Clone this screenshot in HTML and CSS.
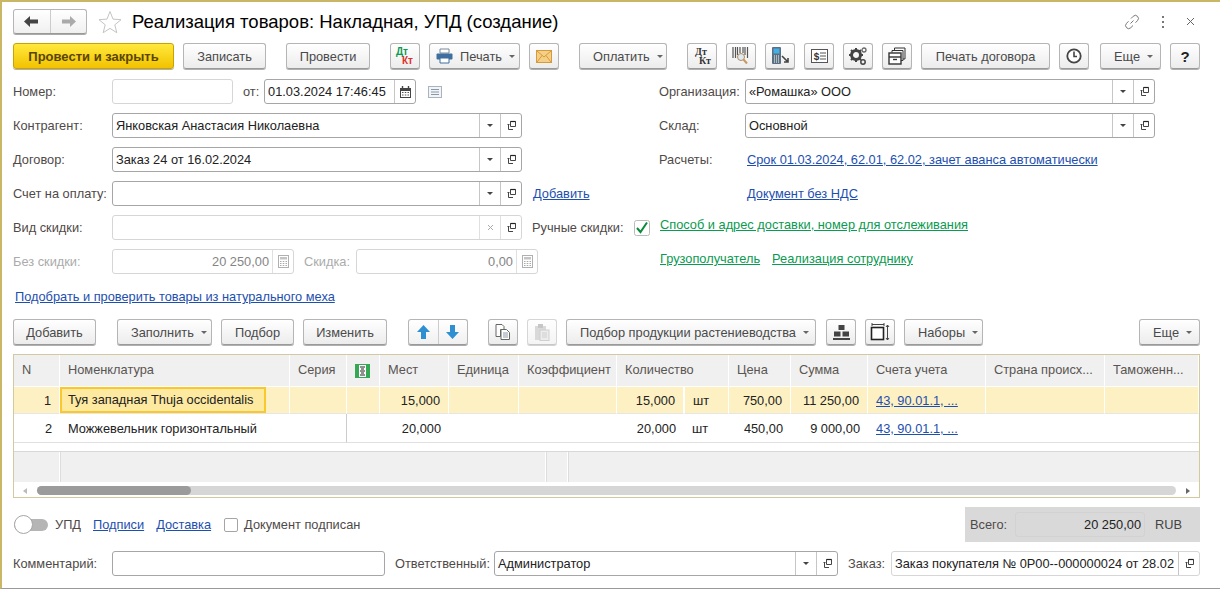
FILE: index.html
```html
<!DOCTYPE html>
<html lang="ru">
<head>
<meta charset="utf-8">
<title>Реализация товаров</title>
<link rel="stylesheet" href="styles.css">
</head>
<body>
<svg class="defs" width="0" height="0" aria-hidden="true">
  <symbol id="open" viewBox="0 0 11 11"><path d="M4.500 1.500h5v5h-5z" fill="none" stroke="#444"/><path d="M4.500 1.500h5" stroke="#222" stroke-width="1.200"/><path d="M2.500 4v5.500H7M1.500 4.500h2" fill="none" stroke="#444"/></symbol>
  <symbol id="calc" viewBox="0 0 11 13"><rect x=".5" y=".5" width="10" height="12" fill="#fff" stroke="#b0b0b0"/><rect x="2" y="2" width="7" height="2.500" fill="#c4c4c4"/><path d="M2 6.500h1.500M4.700 6.500h1.600M7.500 6.500H9M2 8.500h1.500M4.700 8.500h1.600M7.500 8.500H9M2 10.500h1.500M4.700 10.500h1.600M7.500 10.500H9" stroke="#aaa"/></symbol>
</svg>
<main class="window">
  <header class="titlebar">
    <div class="nav">
      <button class="nav-btn"><svg width="15" height="11" viewBox="0 0 15 11"><path d="M0 5.500 6 0v3.500h8v4H6V11z" fill="#444"/></svg></button>
      <button class="nav-btn"><svg width="15" height="11" viewBox="0 0 15 11"><path d="M15 5.500 9 0v3.500H1v4h8V11z" fill="#aaa"/></svg></button>
    </div>
    <svg class="star" width="24" height="24" viewBox="0 0 24 24"><path d="M12 1.500l3 7.600 8 .6-6.200 5.100 2 7.900-6.800-4.300-6.800 4.300 2-7.900L1 9.700l8-.6z" fill="#fff" stroke="#c4c4c4"/></svg>
    <h1 class="title">Реализация товаров: Накладная, УПД (создание)</h1>
    <div class="win-tools">
      <svg width="16" height="16" viewBox="0 0 16 16"><path d="M6.500 9.500l3-3M7 4.500l2.200-2.200a3 3 0 0 1 4.300 4.300L11.500 8.700M9 11.500l-2.200 2.200a3 3 0 0 1-4.300-4.300L4.500 7.300" fill="none" stroke="#777"/></svg>
      <svg width="4" height="14" viewBox="0 0 4 14"><path d="M1 1h2v2H1zM1 6h2v2H1zM1 11h2v2H1z" fill="#777"/></svg>
      <svg width="9" height="9" viewBox="0 0 9 9"><path d="M1 1l7 7M8 1L1 8" stroke="#666"/></svg>
    </div>
  </header>

  <div class="toolbar">
    <button class="btn primary w161">Провести и закрыть</button>
    <button class="btn w83 ml9">Записать</button>
    <button class="btn w84 ml20">Провести</button>
    <button class="btn icon ml20"><svg width="20" height="20" viewBox="0 0 20 20"><text x="1" y="9" class="dt green">Дт</text><text x="7" y="18" class="dt red">Кт</text></svg></button>
    <button class="btn w91 ml9 menu with-icon"><svg width="17" height="16" viewBox="0 0 17 16"><path d="M4 1h9v4H4z" fill="#fff" stroke="#7a8a9a"/><rect x=".5" y="5.500" width="16" height="6" rx="1" fill="#3f6f9f"/><path d="M4 10h9v5H4z" fill="#fff" stroke="#3f6f9f"/></svg><span>Печать</span><i class="caret"></i></button>
    <button class="btn icon ml9"><svg width="16" height="13" viewBox="0 0 16 13"><rect x=".5" y=".5" width="15" height="12" fill="#f5cf85" stroke="#d59a3a"/><path d="M1 1l7 6 7-6M1 12l5-6.500M15 12l-5-6.500" fill="none" stroke="#d59a3a"/></svg></button>
    <button class="btn w88 ml20 menu"><span>Оплатить</span><i class="caret"></i></button>
    <button class="btn icon ml20"><svg width="20" height="20" viewBox="0 0 20 20"><text x="3" y="9" class="dt2">Дт</text><text x="7" y="18" class="dt2">Кт</text></svg></button>
    <button class="btn icon ml9"><svg width="18" height="20" viewBox="0 0 18 20"><path d="M1 1v11M3.500 1v11M5.500 1v8M8 1v6M11 1v6M13 1v8M15.500 1v11" stroke="#555" stroke-width="1.200"/><circle cx="9" cy="11" r="3.500" fill="#dfe9f2" stroke="#b08a5a"/><path d="M11.500 13.500l3.500 4" stroke="#c79a5f" stroke-width="2"/></svg></button>
    <button class="btn icon ml9"><svg width="20" height="20" viewBox="0 0 20 20"><rect x="2" y="1" width="9" height="17" rx="1" fill="#5a6f80"/><rect x="3.500" y="2.500" width="6" height="5" fill="#45aee6"/><path d="M4 10h5M4 12h5M4 14h5M4 16h5" stroke="#fff" stroke-dasharray="1 1"/><path d="M12 10l6 6M18 12v4h-4" fill="none" stroke="#444" stroke-width="1.600"/></svg></button>
    <button class="btn icon ml9"><svg width="17" height="14" viewBox="0 0 17 14"><rect x=".5" y=".5" width="16" height="13" fill="#fff" stroke="#555"/><text x="2.500" y="11" class="dollar">$</text><path d="M9 4h6M9 7h6M9 10h6" stroke="#555"/></svg></button>
    <button class="btn icon ml9"><svg width="20" height="20" viewBox="0 0 20 20"><circle cx="8" cy="9" r="4.500" fill="none" stroke="#444" stroke-width="3"/><path d="M8 2v2M8 14v2M1 9h2M13 9h2M3 4l1.500 1.500M13 4l-1.500 1.500M3 14l1.500-1.500M13 14l-1.500-1.500" stroke="#444" stroke-width="2"/><circle cx="16" cy="4" r="2" fill="none" stroke="#666" stroke-width="1.300"/><circle cx="15" cy="16" r="2.200" fill="none" stroke="#444" stroke-width="1.500"/></svg></button>
    <button class="btn icon ml9"><svg width="18" height="18" viewBox="0 0 18 18"><path d="M6.500 3V1h10.500v11h-2M4 5.500V3.500h11v10h-2" fill="none" stroke="#333"/><rect x="1" y="6" width="12" height="11" fill="#fff" stroke="#333" stroke-width="1.400"/><path d="M1 10h12" stroke="#333" stroke-width="1.400"/><path d="M5 12.500h4" stroke="#333" stroke-width="1.400"/></svg></button>
    <button class="btn w129 ml9">Печать договора</button>
    <button class="btn icon ml9"><svg width="16" height="16" viewBox="0 0 16 16"><circle cx="8" cy="8" r="6.700" fill="#fff" stroke="#444" stroke-width="1.800"/><path d="M8 3.500V8.500H11" fill="none" stroke="#444" stroke-width="1.600"/></svg></button>
    <button class="btn w61 ml11 menu"><span>Еще</span><i class="caret"></i></button>
    <button class="btn icon ml9 help">?</button>
  </div>

  <section class="form">
    <div class="col-left">
      <div class="row">
        <label class="lbl">Номер:</label>
        <div class="field w121 muted"></div>
        <label class="lbl ot">от:</label>
        <div class="field w152"><span class="val date">01.03.2024 17:46:45</span><span class="fbtn"><svg width="11" height="12" viewBox="0 0 11 12"><rect x=".5" y="2.500" width="10" height="9" fill="#fff" stroke="#444"/><rect x="0" y="2" width="11" height="3" fill="#444"/><path d="M2.500 0v3M8.500 0v3" stroke="#444" stroke-width="1.400"/><path d="M2 6.500h1.500M4.800 6.500h1.500M7.500 6.500H9M2 9h1.500M4.800 9h1.500M7.500 9H9" stroke="#555"/></svg></span></div>
        <svg class="note" width="14" height="12" viewBox="0 0 14 12"><rect x=".5" y=".5" width="13" height="11" fill="#f2f5f8" stroke="#a9b4c0"/><path d="M3 3.500h8M3 6h8M3 8.500h8" stroke="#8b98a6"/></svg>
      </div>
      <div class="row">
        <label class="lbl">Контрагент:</label>
        <div class="field w410"><span class="val">Янковская Анастасия Николаевна</span><span class="fbtn"><i class="caret dark"></i></span><span class="fbtn"><svg class="oi"><use href="#open"/></svg></span></div>
      </div>
      <div class="row">
        <label class="lbl">Договор:</label>
        <div class="field w410"><span class="val">Заказ 24 от 16.02.2024</span><span class="fbtn"><i class="caret dark"></i></span><span class="fbtn"><svg class="oi"><use href="#open"/></svg></span></div>
      </div>
      <div class="row">
        <label class="lbl">Счет на оплату:</label>
        <div class="field w410"><span class="val"></span><span class="fbtn"><i class="caret dark"></i></span><span class="fbtn"><svg class="oi"><use href="#open"/></svg></span></div>
        <a class="link add" href="#">Добавить</a>
      </div>
      <div class="row">
        <label class="lbl">Вид скидки:</label>
        <div class="field w410 muted"><span class="val"></span><span class="fbtn"><svg width="7" height="7" viewBox="0 0 7 7"><path d="M1 1l5 5M6 1L1 6" stroke="#aaa"/></svg></span><span class="fbtn"><svg class="oi"><use href="#open"/></svg></span></div>
        <label class="lbl manual">Ручные скидки:</label>
        <svg class="check" width="16" height="16" viewBox="0 0 16 16"><rect x=".5" y=".5" width="15" height="15" rx="2" fill="#fff" stroke="#bbb"/><path d="M3 8l3.500 4L13 2.500" fill="none" stroke="#0a8a3c" stroke-width="2"/></svg>
      </div>
      <div class="row">
        <label class="lbl off">Без скидки:</label>
        <div class="field w182 muted"><span class="val num dim">20 250,00</span><span class="fbtn"><svg class="ci"><use href="#calc"/></svg></span></div>
        <label class="lbl off skidka">Скидка:</label>
        <div class="field w182 muted"><span class="val num dim">0,00</span><span class="fbtn"><svg class="ci"><use href="#calc"/></svg></span></div>
      </div>
    </div>
    <div class="col-right">
      <div class="row">
        <label class="lbl rl">Организация:</label>
        <div class="field w410"><span class="val">«Ромашка» ООО</span><span class="fbtn"><i class="caret dark"></i></span><span class="fbtn"><svg class="oi"><use href="#open"/></svg></span></div>
      </div>
      <div class="row">
        <label class="lbl rl">Склад:</label>
        <div class="field w410"><span class="val">Основной</span><span class="fbtn"><i class="caret dark"></i></span><span class="fbtn"><svg class="oi"><use href="#open"/></svg></span></div>
      </div>
      <div class="row">
        <label class="lbl rl">Расчеты:</label>
        <a class="link rv" href="#">Срок 01.03.2024, 62.01, 62.02, зачет аванса автоматически</a>
      </div>
      <div class="row">
        <span class="rl"></span>
        <a class="link rv" href="#">Документ без НДС</a>
      </div>
      <div class="row raised">
        <a class="link green" href="#">Способ и адрес доставки, номер для отслеживания</a>
      </div>
      <div class="row">
        <a class="link green" href="#">Грузополучатель</a>
        <a class="link green" href="#">Реализация сотруднику</a>
      </div>
    </div>
  </section>

  <a class="link fur" href="#">Подобрать и проверить товары из натурального меха</a>

  <div class="toolbar second">
    <button class="btn w83">Добавить</button>
    <button class="btn w95 ml21 menu"><span>Заполнить</span><i class="caret"></i></button>
    <button class="btn w73 ml9">Подбор</button>
    <button class="btn w84 ml9">Изменить</button>
    <div class="nav small ml21">
      <button class="nav-btn s"><svg width="13" height="14" viewBox="0 0 13 14"><path d="M6.500 0l6.500 7H9v7H4V7H0z" fill="#2f8fd3"/></svg></button>
      <button class="nav-btn s"><svg width="13" height="14" viewBox="0 0 13 14"><path d="M6.500 14L13 7H9V0H4v7H0z" fill="#2f8fd3"/></svg></button>
    </div>
    <button class="btn icon ml20"><svg width="16" height="16" viewBox="0 0 16 16"><path d="M1 .5h6l2 2v3H5.500v7H1z" fill="#fff" stroke="#666"/><path d="M6 5.500h5.500l3 3v7H6z" fill="#fff" stroke="#666"/><path d="M8 9h5M8 11h5M8 13h5" stroke="#8899aa"/></svg></button>
    <button class="btn icon ml9 disabled"><svg width="16" height="17" viewBox="0 0 16 17"><rect x="1" y="2" width="11" height="14" fill="#bbb"/><rect x="4" y="0" width="5" height="4" fill="#999"/><rect x="6" y="6" width="9" height="10.500" fill="#ddd" stroke="#aaa"/><path d="M8 9h5M8 11h5M8 13h5" stroke="#aaa"/></svg></button>
    <button class="btn w250 ml9 menu"><span>Подбор продукции растениеводства</span><i class="caret"></i></button>
    <button class="btn icon ml10"><svg width="17" height="15" viewBox="0 0 17 15"><path d="M5.500 0h6v5h-6zM1 6.500h6.500v5H1zM9.500 6.500H16v5H9.500z" fill="#444"/><path d="M0 14h17" stroke="#444" stroke-width="2"/></svg></button>
    <button class="btn icon ml9"><svg width="20" height="18" viewBox="0 0 20 18"><rect x="1.500" y="4.500" width="12" height="12" fill="#fff" stroke="#222" stroke-width="1.600"/><path d="M2 1.500h12M2 0v3M14 0v3" stroke="#444"/><path d="M17.500 2v15M16 4l1.500-2L19 4M16 15l1.500 2 1.500-2" fill="none" stroke="#444"/></svg></button>
    <button class="btn w79 ml9 menu"><span>Наборы</span><i class="caret"></i></button>
    <button class="btn w61 push menu"><span>Еще</span><i class="caret"></i></button>
  </div>

  <section class="grid-wrap">
    <table class="grid">
      <colgroup>
        <col class="c46"><col class="c230"><col class="c57"><col class="c33"><col class="c69"><col class="c70"><col class="c98"><col class="c67"><col class="c45"><col class="c62"><col class="c77"><col class="c118"><col class="c119"><col class="c94">
      </colgroup>
      <thead>
        <tr>
          <th>N</th><th>Номенклатура</th><th>Серия</th>
          <th class="mark"><svg width="15" height="14" viewBox="0 0 15 14"><rect width="15" height="14" fill="#34a853"/><rect x="4" y="1" width="7" height="12" fill="#fff"/><path d="M5 3h5M6 5h3M5 7h5M6 9h3M5 11h5" stroke="#222"/></svg></th>
          <th>Мест</th><th>Единица</th><th>Коэффициент</th><th colspan="2">Количество</th><th>Цена</th><th>Сумма</th><th>Счета учета</th><th>Страна происх...</th><th>Таможенн...</th>
        </tr>
      </thead>
      <tbody>
        <tr class="sel">
          <td class="num">1</td>
          <td class="cur-td"><div class="cur">Туя западная Thuja occidentalis</div></td>
          <td></td><td></td><td class="num">15,000</td><td></td><td></td><td class="num">15,000</td><td class="unit">шт</td><td class="num">750,00</td><td class="num">11 250,00</td>
          <td><a class="link" href="#">43, 90.01.1, ...</a></td><td></td><td></td>
        </tr>
        <tr class="plain">
          <td class="num">2</td>
          <td colspan="2" class="name">Можжевельник горизонтальный</td>
          <td></td><td class="num">20,000</td><td></td><td></td><td class="num">20,000</td><td class="unit">шт</td><td class="num">450,00</td><td class="num">9 000,00</td>
          <td><a class="link" href="#">43, 90.01.1, ...</a></td><td></td><td></td>
        </tr>
      </tbody>
    </table>
    <div class="grid-space"></div>
    <div class="grid-foot"><span class="gf g1"></span><span class="gf g2"></span><span class="gf g3"></span><span class="gf g4"></span></div>
    <div class="hscroll">
      <i class="arr left"></i>
      <div class="track"><div class="thumb"></div></div>
      <i class="arr right"></i>
    </div>
  </section>

  <div class="status">
    <span class="toggle"><i class="knob"></i></span>
    <span class="lbl upd">УПД</span>
    <a class="link" href="#">Подписи</a>
    <a class="link" href="#">Доставка</a>
    <span class="box"></span>
    <span class="lbl signed">Документ подписан</span>
    <div class="total">
      <span class="lbl total-lbl">Всего:</span>
      <span class="total-val">20 250,00</span>
      <span class="cur-code">RUB</span>
    </div>
  </div>

  <div class="bottom">
    <label class="lbl">Комментарий:</label>
    <div class="field w273"></div>
    <label class="lbl resp">Ответственный:</label>
    <div class="field w344"><span class="val">Администратор</span><span class="fbtn"><i class="caret dark"></i></span><span class="fbtn"><svg class="oi"><use href="#open"/></svg></span></div>
    <label class="lbl order">Заказ:</label>
    <div class="field w309 soft"><span class="val clip">Заказ покупателя № 0Р00--000000024 от 28.02</span><span class="fbtn"><svg class="oi"><use href="#open"/></svg></span></div>
  </div>
</main>
</body>
</html>
```

FILE: styles.css
```css
* { box-sizing: border-box; }
html, body { margin: 0; padding: 0; }
body { width: 1220px; height: 589px; overflow: hidden; background: #fff; font: 12.8px "Liberation Sans", Arial, sans-serif; color: #222; }
.defs { position: absolute; }
.window { width: 1220px; height: 589px; border-top: 2px solid #c9b766; border-left: 2px solid #c9b766; border-bottom: 1px solid #999; padding: 7px 20px 0 11px; overflow: hidden; }
button { font: inherit; color: inherit; margin: 0; }

.titlebar { display: flex; align-items: center; height: 25px; }
.nav { display: flex; height: 25px; width: 74px; border: 1px solid #b5b5b5; border-bottom-color: #999; border-radius: 3px; background: linear-gradient(#fff, #f0f0f0); box-shadow: 0 1px 0 #aaa; }
.nav-btn { flex: 1; border: 0; background: none; padding: 0; display: flex; align-items: center; justify-content: center; }
.nav-btn + .nav-btn { border-left: 1px solid #ccc; }
.star { margin-left: 11px; }
.title { margin: 0 0 0 10px; font-size: 18.5px; font-weight: 400; color: #000; }
.win-tools { margin-left: auto; display: flex; align-items: center; gap: 21px; margin-right: 5px; }

.toolbar { display: flex; align-items: flex-start; height: 26px; margin-top: 9px; }
.btn { height: 26px; padding: 0; border: 1px solid #b5b5b5; border-bottom-color: #9a9a9a; border-radius: 3px; background: linear-gradient(#fff, #ececec); box-shadow: 0 1px 0 #b0b0b0; color: #4a4a4a; display: flex; align-items: center; justify-content: center; flex: none; }
.btn.primary { background: linear-gradient(#ffe93d, #f2c200); border-color: #c9a400; color: #5a4500; font-weight: 700; font-size: 13px; }
.btn.icon { width: 30px; }
.btn.disabled { opacity: .55; }
.help { font-size: 15px; font-weight: 700; color: #222; }
.menu { gap: 7px; justify-content: flex-start; padding-left: 13px; }
.menu.with-icon { padding-left: 6px; }
.caret { display: inline-block; width: 0; height: 0; border-left: 3px solid transparent; border-right: 3px solid transparent; border-top: 3px solid #666; }
.caret.dark { border-top-color: #444; }
.w161 { width: 161px; } .w83 { width: 83px; } .w84 { width: 84px; } .w91 { width: 91px; } .w88 { width: 88px; } .w129 { width: 129px; } .w61 { width: 61px; } .w95 { width: 95px; } .w73 { width: 73px; } .w250 { width: 250px; } .w79 { width: 79px; }
.ml9 { margin-left: 9px; } .ml10 { margin-left: 10px; } .ml11 { margin-left: 11px; } .ml20 { margin-left: 20px; } .ml21 { margin-left: 21px; }
.push { margin-left: auto; }
.dt { font: 700 10px "Liberation Sans", sans-serif; }
.dt2 { font: 700 10px "Liberation Serif", serif; fill: #333; }
.green { fill: #0a9a50; } .red { fill: #e0302a; }
.dollar { font: 700 10px "Liberation Mono", monospace; fill: #333; }

.form { display: flex; margin-top: 10px; }
.col-left { width: 646px; flex: none; }
.col-right { flex: 1; }
.row { display: flex; align-items: center; height: 25px; margin-bottom: 9px; }
.row.raised { margin-top: -3px; }
.lbl { color: #4f4a48; white-space: nowrap; }
.row > .lbl:first-child { width: 99px; flex: none; }
.row > .lbl.rl, .rl { width: 86px; flex: none; }
.ot { margin-left: 10px; width: 21px; }
.lbl.off { color: #ababab; }
.manual { margin-left: 10px; width: 96px; flex: none; }
.check { margin-left: 6px; }
.skidka { margin-left: 10px; width: 52px; }
.note { margin-left: 12px; }
.add { margin-left: 11px; }
.rv { margin-left: 2px; }

.field { height: 25px; display: flex; align-items: stretch; border: 1px solid #a6a6a6; border-radius: 3px; background: #fff; flex: none; }
.field.muted, .field.soft { border-color: #d6d6d6; }
.w121 { width: 121px; } .w152 { width: 152px; } .w410 { width: 410px; } .w182 { width: 182px; } .w273 { width: 273px; } .w344 { width: 344px; } .w309 { width: 309px; }
.val { flex: 1; min-width: 0; padding: 0 3px; line-height: 23px; white-space: nowrap; }
.val.num { text-align: right; padding-right: 3px; }
.val.date { letter-spacing: .02px; }
.val.dim { color: #858585; }
.val.clip { overflow: hidden; }
.fbtn { width: 21px; flex: none; border-left: 1px solid #c6c6c6; display: flex; align-items: center; justify-content: center; }
.field.muted .fbtn { border-left-color: #e0e0e0; }
.oi { width: 11px; height: 11px; }
.ci { width: 11px; height: 13px; }

.link { color: #1d4faf; text-decoration: underline; white-space: nowrap; }
.link.green { color: #0a9a50; margin-left: 1px; }
.link.green + .link.green { margin-left: 12px; }
.fur { display: block; margin: 7px 0 0 2px; line-height: 14px; width: max-content; }

.toolbar.second { margin-top: 15px; }
.nav.small { width: 60px; height: 26px; flex: none; }
.nav-btn.s { flex: 1; }

.grid-wrap { margin-top: 9px; width: 1187px; height: 144px; border: 1px solid #d2c9a0; display: flex; flex-direction: column; overflow: hidden; }
.grid { table-layout: fixed; width: 1185px; border-collapse: separate; border-spacing: 0; }
.c46 { width: 46px; } .c230 { width: 230px; } .c57 { width: 57px; } .c33 { width: 33px; } .c69 { width: 69px; } .c70 { width: 70px; } .c98 { width: 98px; } .c67 { width: 67px; } .c45 { width: 45px; } .c62 { width: 62px; } .c77 { width: 77px; } .c118 { width: 118px; } .c119 { width: 119px; } .c94 { width: 94px; }
.grid th { height: 32px; background: #f0f0f0; border-right: 1px solid #fff; border-bottom: 1px solid #fff; font-weight: 400; color: #5a5552; text-align: left; padding: 0 8px 2px; white-space: nowrap; overflow: hidden; }
.grid th.mark { padding: 0 0 0 8px; }
.grid th svg { display: block; }
.grid td { padding: 0 8px; white-space: nowrap; overflow: hidden; }
.grid td.num { text-align: right; }
.sel td { height: 27px; background: #fdf1c3; border-right: 1px solid #fff; border-bottom: 1px solid #e6e6e6; }
.sel td.unit { border-left: 1px solid #fff; }
.grid .sel td.cur-td { padding: 0; }
.cur { width: 206px; height: 26px; background: #fde9a0; border: 2px solid #f8c82e; padding: 0 6px; line-height: 22px; }
.grid .plain td { height: 29px; border-bottom: 1px solid #e0e0e0; padding-top: 1px; }
.plain td.name { border-right: 1px solid #ccc; }
.grid-space { height: 9px; border-bottom: 1px solid #d8d8d8; flex: none; }
.grid-foot { height: 30px; flex: none; display: flex; background: #f0f0f0; }
.gf { display: block; border-right: 1px solid #fff; height: 30px; flex: none; box-shadow: 1px 0 0 #ddd; }
.g1 { width: 46px; } .g2 { width: 486px; } .g3 { width: 22px; } .g4 { flex: 1; border: 0; box-shadow: none; }
.hscroll { display: flex; align-items: center; height: 15px; flex: none; padding: 4px 0 2px; }
.track { flex: 1; height: 9px; background: #d6d6d6; border-radius: 5px; }
.thumb { width: 154px; height: 9px; background: #9b9b9b; border-radius: 5px; }
.arr { display: block; width: 0; height: 0; border-top: 3px solid transparent; border-bottom: 3px solid transparent; flex: none; }
.arr.left { border-right: 4px solid #bbb; margin: 0 10px 0 9px; }
.arr.right { border-left: 4px solid #666; margin: 0 9px 0 10px; }

.status { display: flex; align-items: center; height: 35px; margin-top: 9px; }
.toggle { width: 34px; height: 12px; margin-left: 1px; background: #b5b5b5; border-radius: 6px; position: relative; flex: none; margin-top: 1px; }
.knob { position: absolute; left: 0; top: -4px; width: 19px; height: 19px; border-radius: 50%; background: #fff; border: 1px solid #a5a5a5; }
.upd { margin-left: 7px; }
.status .link { margin-left: 12px; }
.box { width: 14px; height: 14px; border: 1px solid #a5a5a5; border-radius: 2px; background: #fff; margin-left: 13px; flex: none; }
.signed { margin-left: 6px; }
.total { margin-left: auto; width: 235px; height: 35px; background: #d9d9d9; display: flex; align-items: center; padding-left: 5px; }
.total-lbl { width: 45px; flex: none; }
.total-val { width: 130px; height: 25px; line-height: 23px; text-align: right; flex: none; border: 1px solid #d2d2d2; padding-right: 3px; border-radius: 3px; }
.cur-code { margin-left: 10px; color: #444; }

.bottom { display: flex; align-items: center; height: 25px; margin-top: 9px; }
.bottom > .lbl:first-child { width: 99px; flex: none; }
.resp { margin-left: 10px; width: 99px; flex: none; }
.order { margin-left: 10px; width: 43px; flex: none; }
```
